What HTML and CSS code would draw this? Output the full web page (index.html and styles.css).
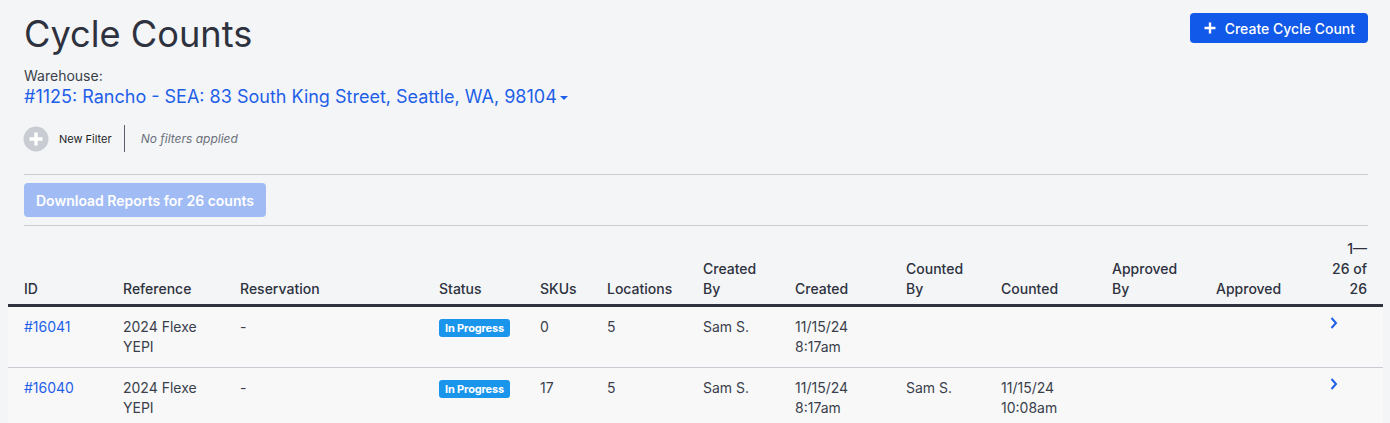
FILE: index.html
```html
<!DOCTYPE html>
<html lang="en">

<head>
    <meta charset="UTF-8">
    <meta name="viewport" content="width=device-width, initial-scale=1.0">
    <title>Cycle Counts</title>
    <link rel="stylesheet" href="styles.css">
</head>

<body>
    <main class="page">
        <div class="page-header">
            <div class="title-block">
                <h1>Cycle Counts</h1>
                <div class="warehouse-label">Warehouse:</div>
                <a class="warehouse-link" href="#">#1125: Rancho - SEA: 83 South King Street, Seattle, WA, 98104<span class="caret"></span></a>
            </div>
            <button class="btn-primary">
                <svg width="12" height="12" viewBox="0 0 12 12"><path d="M6 0.5v11M0.5 6h11" stroke="#fff" stroke-width="2.4"/></svg>
                Create Cycle Count
            </button>
        </div>

        <div class="filters">
            <span class="filter-add">
                <svg width="26" height="26" viewBox="0 0 26 26">
                    <circle cx="13" cy="13" r="12.5" fill="#c9ccd3"/>
                    <path d="M13 6.5v13M6.5 13h13" stroke="#fff" stroke-width="3.4"/>
                </svg>
                <span class="filter-label">New Filter</span>
            </span>
            <span class="filter-divider"></span>
            <span class="filter-empty">No filters applied</span>
        </div>

        <div class="actions">
            <button class="btn-download" disabled>Download Reports for 26 counts</button>
        </div>

        <table class="counts">
            <thead>
                <tr>
                    <th class="c-id">ID</th>
                    <th class="c-ref">Reference</th>
                    <th class="c-res">Reservation</th>
                    <th class="c-status">Status</th>
                    <th class="c-skus">SKUs</th>
                    <th class="c-loc">Locations</th>
                    <th class="c-cby">Created By</th>
                    <th class="c-created">Created</th>
                    <th class="c-countby">Counted By</th>
                    <th class="c-counted">Counted</th>
                    <th class="c-aby">Approved By</th>
                    <th class="c-approved">Approved</th>
                    <th class="c-pager">1—26 of 26</th>
                </tr>
            </thead>
            <tbody>
                <tr>
                    <td><a href="#">#16041</a></td>
                    <td>2024 Flexe YEPI</td>
                    <td>-</td>
                    <td><span class="badge">In Progress</span></td>
                    <td>0</td>
                    <td>5</td>
                    <td>Sam S.</td>
                    <td>11/15/24 8:17am</td>
                    <td></td>
                    <td></td>
                    <td></td>
                    <td></td>
                    <td class="chev"><svg width="8" height="12" viewBox="0 0 8 12"><path d="M1.5 1l4.5 5-4.5 5" fill="none" stroke="#1f5fe8" stroke-width="2"/></svg></td>
                </tr>
                <tr>
                    <td><a href="#">#16040</a></td>
                    <td>2024 Flexe YEPI</td>
                    <td>-</td>
                    <td><span class="badge">In Progress</span></td>
                    <td>17</td>
                    <td>5</td>
                    <td>Sam S.</td>
                    <td>11/15/24 8:17am</td>
                    <td>Sam S.</td>
                    <td>11/15/24 10:08am</td>
                    <td></td>
                    <td></td>
                    <td class="chev"><svg width="8" height="12" viewBox="0 0 8 12"><path d="M1.5 1l4.5 5-4.5 5" fill="none" stroke="#1f5fe8" stroke-width="2"/></svg></td>
                </tr>
            </tbody>
        </table>
    </main>
</body>

</html>
```

FILE: styles.css
```css
body {
    font-family: Inter, "Liberation Sans", sans-serif;
    background-color: #f4f5f7;
    color: #3a3f4b;
    margin: 0;
    padding: 0;
}

.page {
    padding: 13px 22px 0 24px;
}

.page-header {
    display: flex;
    justify-content: space-between;
    align-items: flex-start;
}

h1 {
    margin: 0;
    font-size: 36.2px;
    font-weight: 400;
    line-height: 42px;
    color: #2d323e;
}

.warehouse-label {
    margin-top: 12px;
    font-size: 14px;
    line-height: 18px;
    color: #3a3f4b;
}

.warehouse-link {
    display: inline-block;
    font-size: 18px;
    line-height: 24px;
    color: #1f5fe8;
    text-decoration: none;
}

.caret {
    display: inline-block;
    width: 0;
    height: 0;
    margin-left: 3px;
    vertical-align: middle;
    border-left: 4px solid transparent;
    border-right: 4px solid transparent;
    border-top: 4px solid #1f5fe8;
}

.btn-primary {
    display: flex;
    align-items: center;
    gap: 9px;
    height: 30px;
    padding: 0 13px 0 14px;
    background-color: #1159e8;
    color: white;
    border: none;
    border-radius: 4px;
    font-family: inherit;
    font-size: 14px;
    font-weight: 500;
    cursor: pointer;
}

.filters {
    display: flex;
    align-items: center;
    margin-top: 16px;
    padding-bottom: 22px;
    border-bottom: 1px solid #c9ccd3;
}

.filter-add {
    display: flex;
    align-items: center;
    gap: 10px;
}

.filter-add svg {
    margin-left: -1px;
}

.filter-label {
    font-size: 11px;
    color: #1c1f26;
}

.filter-divider {
    width: 1px;
    height: 27px;
    margin: 0 16px 0 12px;
    background-color: #5b606b;
}

.filter-empty {
    font-size: 12px;
    font-style: italic;
    color: #6b707b;
}

.actions {
    padding: 8px 0 8px;
    border-bottom: 1px solid #c9ccd3;
}

.btn-download {
    height: 34px;
    padding: 0 12px;
    background-color: #a1bbf4;
    color: white;
    border: none;
    border-radius: 4px;
    font-family: inherit;
    font-size: 14px;
    font-weight: 600;
}

.counts {
    width: 1375px;
    table-layout: fixed;
    margin: 13px 0 0 -16px;
    border-collapse: collapse;
    font-size: 14px;
}

.counts th {
    box-sizing: border-box;
    padding: 0 16px 5px 16px;
    text-align: left;
    vertical-align: bottom;
    font-weight: 500;
    line-height: 20px;
    color: #2d323e;
    border-bottom: 3px solid #2f333d;
}

.counts td {
    padding: 10px 16px 10px 16px;
    vertical-align: top;
    line-height: 20px;
    background-color: #f8f8f9;
    border-bottom: 1px solid #c9ccd3;
}

.counts td a {
    color: #1f5fe8;
    text-decoration: none;
}

.c-id { width: 99px; }
.c-ref { width: 117px; }
.c-res { width: 199px; }
.c-status { width: 101px; }
.c-skus { width: 67px; }
.c-loc { width: 96px; }
.c-cby { width: 92px; }
.c-created { width: 111px; }
.c-countby { width: 95px; }
.c-counted { width: 111px; }
.c-aby { width: 104px; }
.c-approved { width: 99px; }

.counts th.c-pager {
    width: 84px;
    padding-left: 32px;
    text-align: right;
}

.badge {
    display: inline-block;
    padding: 0 6px;
    background-color: #1a95ec;
    color: white;
    border-radius: 3px;
    font-size: 11px;
    font-weight: 700;
    line-height: 18px;
    letter-spacing: -0.15px;
    white-space: nowrap;
}

.chev {
    padding-top: 15px;
}

.chev svg {
    display: block;
    margin-left: 15px;
}
```
